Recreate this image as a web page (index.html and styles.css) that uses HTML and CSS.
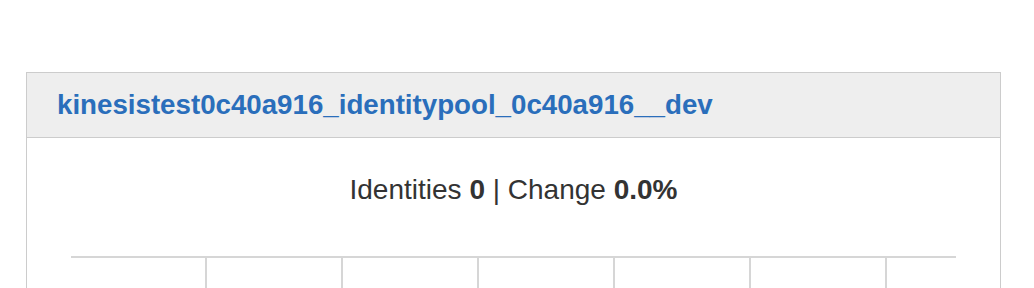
FILE: index.html
```html
<!DOCTYPE html>
<html lang="en">
<head>
    <meta charset="UTF-8">
    <title>Identity pool</title>
    <link rel="stylesheet" href="styles.css">
</head>
<body>
    <div class="panel">
        <div class="panel-heading">
            <a href="#" class="pool-link">kinesistest0c40a916_identitypool_0c40a916__dev</a>
        </div>
        <div class="panel-body">
            <p class="stats">Identities <b>0</b> | Change <b>0.0%</b></p>
            <div class="chart">
                <div class="chart-col"></div>
                <div class="chart-col"></div>
                <div class="chart-col"></div>
                <div class="chart-col"></div>
                <div class="chart-col"></div>
                <div class="chart-col"></div>
                <div class="chart-col last"></div>
            </div>
        </div>
    </div>
</body>
</html>
```

FILE: styles.css
```css
body {
    margin: 0;
    padding: 72px 33px 0 26px;
    background: #fff;
    font-family: 'Liberation Sans', Arial, sans-serif;
    color: #333;
}
.panel {
    border: 1px solid #ccc;
    border-bottom: none;
    background: #fff;
}
.panel-heading {
    height: 64px;
    display: flex;
    align-items: center;
    padding: 0 30px;
    background: #eee;
    border-bottom: 1px solid #ccc;
}
.pool-link {
    color: #2a6ebb;
    font-size: 27.7px;
    font-weight: bold;
    text-decoration: none;
}
.panel-body {
    padding: 36px 44px 0 44px;
}
.stats {
    margin: 0;
    text-align: center;
    font-size: 28px;
    line-height: 32px;
    color: #333;
}
.stats b {
    font-weight: bold;
}
.chart {
    margin-top: 50px;
    display: grid;
    grid-template-columns: repeat(6, 136px) 1fr;
    border-top: 2px solid #d6d6d6;
    height: 40px;
}
.chart-col {
    border-right: 2px solid #d6d6d6;
}
.chart-col.last {
    border-right: none;
}
```
